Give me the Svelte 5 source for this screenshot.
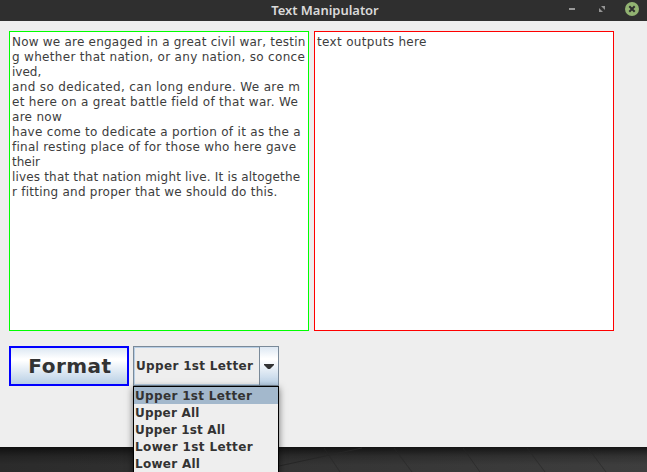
<script>
  const lines = [
    ['Now we are engaged in a great civil war, testin', 0.22],
    ['g whether that nation, or any nation, so conce', 0.31],
    ['ived,', 0],
    ['and so dedicated, can long endure. We are m', 0.35],
    ['et here on a great battle field of that war. We', 0.31],
    ['are now', 0.3],
    ['have come to dedicate a portion of it as the a', 0.3],
    ['final resting place of for those who here gave', 0.25],
    ['their', 0],
    ['lives that that nation might live. It is altogethe', 0.17],
    ['r fitting and proper that we should do this.', 0.24]
  ];
  const options = [
    ['Upper 1st Letter', 0.33],
    ['Upper All', 0.22],
    ['Upper 1st All', 0.17],
    ['Lower 1st Letter', 0.38],
    ['Lower All', 0.28]
  ];
  const selected = 0;
</script>

<div class="screen">
  <div class="window">
    <header>
      <span class="title">Text Manipulator</span>
      <svg class="controls" width="90" height="21" viewBox="0 0 90 21">
        <path d="M12 8h6v2h-6z" fill="#999" />
        <path d="M44 6h4v4zM42 8l4 4h-4z" fill="#959595" />
        <circle cx="75" cy="9" r="7" fill="#92b372" />
        <path d="M72.3 6.3l5.4 5.4M77.7 6.3l-5.4 5.4" stroke="#2f2f2f" stroke-width="2" />
      </svg>
    </header>
    <main>
      <div class="areas">
        <div class="area input">
          {#each lines as [text, spacing]}
            <div style="letter-spacing: {spacing}px">{text}</div>
          {/each}
        </div>
        <div class="area output"><div class="out">text outputs here</div></div>
      </div>
      <div class="actions">
        <button class="format">Format</button>
        <div class="combo">
          <span class="value">{options[selected][0]}</span>
          <span class="arrow">
            <svg width="10" height="5" viewBox="0 0 10 5"><path d="M0 0h10v1L6 5H4L0 1z" fill="#333" /></svg>
          </span>
          <div class="popup">
            {#each options as [text, spacing], i}
              <div class="option" class:active={i === selected} style="letter-spacing: {spacing}px">{text}</div>
            {/each}
          </div>
        </div>
      </div>
    </main>
  </div>
  <div class="desktop">
    <svg width="647" height="25" viewBox="0 0 647 25" fill="none" stroke="#262626" stroke-width="1">
      <path d="M279 19L362 1" />
      <path d="M324 1l16 24M394 1l18 24M463 1l17 24M527 1l18 24M588 1l18 24" opacity=".6" />
    </svg>
  </div>
</div>

<style>
  :global(body) { margin: 0; overflow: hidden; }
  .screen {
    width: 647px; height: 472px; overflow: hidden;
    display: flex; flex-direction: column;
    font-family: "DejaVu Sans", sans-serif; color: #333;
  }
  .window { height: 447px; flex: none; background: #eee; display: flex; flex-direction: column; position: relative; z-index: 1; }
  header { height: 21px; flex: none; background: #2f2f2f; display: grid; grid-template-columns: 90px 1fr 90px; }
  .title {
    grid-column: 2; text-align: center; color: #dadada; letter-spacing: -.04px;
    font: 600 13px/21px "Noto Sans", sans-serif; padding-left: 3px; white-space: nowrap;
  }
  .controls { grid-column: 3; }
  main { padding: 10px 9px 0; }
  .areas { display: flex; gap: 5px; }
  .area {
    box-sizing: border-box; width: 300px; height: 300px; background: #fff; color: #3d3d3d;
    padding: 3px 2px 2px; font-size: 12px; line-height: 15px; white-space: pre;
  }
  .input { border: 1px solid #0f0; }
  .output { border: 1px solid #f00; }
  .out { letter-spacing: .33px; }
  .actions { display: flex; gap: 4px; margin-top: 15px; }
  .format {
    box-sizing: border-box; width: 120px; height: 40px; padding: 0 0 0 2px; border: 2px solid #00f; border-radius: 0;
    font: bold 20px/34px "DejaVu Sans", sans-serif; color: #333; letter-spacing: .5px;
    background: linear-gradient(#dde8f3, #fff 30%, #fff 35%, #b8cfe5);
  }
  .combo {
    position: relative; box-sizing: border-box; width: 146px; height: 40px;
    border: 1px solid #7a8a99; display: flex; font-weight: bold; font-size: 12px; white-space: nowrap;
  }
  .value { box-sizing: border-box; flex: 1; border: 1px solid #b8cfe5; border-right: 0; padding-left: 1px; line-height: 36px; letter-spacing: .33px; }
  .arrow {
    box-sizing: border-box; width: 19px; flex: none; border-left: 1px solid #7a8a99;
    display: flex; align-items: center; justify-content: center; padding-top: 1px;
    background: linear-gradient(#dde8f3, #fff 30%, #fff 35%, #b8cfe5);
  }
  .popup {
    position: absolute; left: -1px; top: 39px; box-sizing: border-box; width: 146px; height: 90px;
    border: 1px solid #000; background: #eee; box-shadow: 0 2px 7px rgba(0, 0, 0, .55);
  }
  .option { box-sizing: border-box; height: 17px; line-height: 17px; padding: 1px 0 0 1px; }
  .active { background: #a3b8cc; }
  .desktop {
    height: 25px; flex: none;
    background: linear-gradient(rgba(0, 0, 0, .65), rgba(0, 0, 0, .2) 9px, transparent 18px), linear-gradient(90deg, #2b2b2b, #353535 50%, #3e3e3e);
  }
  .desktop svg { display: block; }
</style>
